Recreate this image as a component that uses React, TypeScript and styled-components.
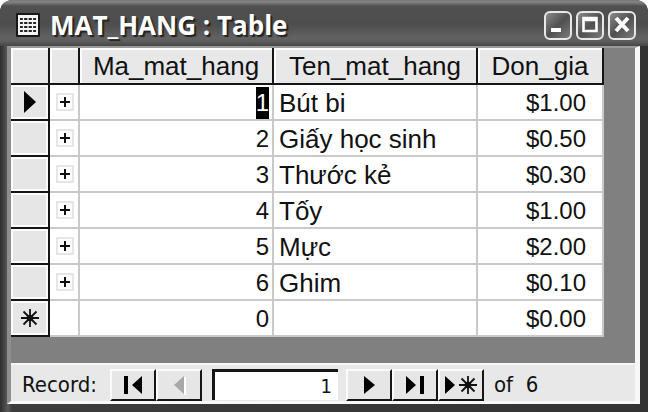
import React from "react";
import styled, { createGlobalStyle } from "styled-components";

const GlobalStyle = createGlobalStyle`
  *, *::before, *::after { box-sizing: border-box; }
  body { margin: 0; background: #fff; }
`;

const Window = styled.main`
  display: flex;
  flex-direction: column;
  min-height: 100vh;
  padding: 0 8px 8px 7px;
  border-radius: 12px 12px 0 0;
  background: linear-gradient(to right, #2e2e2e 0, #444 4px, #5c5c5c 8px, #3c3c3c 12px, #333 100%);
  font-family: "Liberation Sans", Arial, sans-serif;
  color: #111;
`;

const TitleBar = styled.header`
  display: flex;
  align-items: center;
  gap: 10px;
  height: 46px;
  margin: 0 -8px 0 -7px;
  padding: 4px 12px 0 16px;
  border-radius: 12px 12px 0 0;
  background: linear-gradient(#777 0, #858585 2px, #505050 6px, #4d4d4d 24px, #626262 38px, #5e5e5e 41px, #464646 46px);
`;

const Title = styled.h1`
  flex: 1;
  margin: 0;
  font: bold 26px/30px "Open Sans", "Noto Sans", sans-serif;
  color: #fff;
  text-shadow: 2px 2px 1px #222;
  white-space: pre;
`;

const WindowButtons = styled.div`
  display: flex;
  gap: 4px;
`;

const WindowButton = styled.button`
  display: flex;
  align-items: center;
  justify-content: center;
  width: 28px;
  height: 29px;
  padding: 0;
  border: 2px solid #e8e8e8;
  border-radius: 6px;
  background: linear-gradient(135deg, #8a8a8a, #505050 50%, #7a7a7a);
`;

const Client = styled.section`
  display: flex;
  flex: 1;
  flex-direction: column;
  border-style: solid;
  border-width: 2px 5px 3px 4px;
  border-color: #9a9a9a #f8f8f8 #f8f8f8 #8e8e8e;
  background: #e8e8e8;
`;

const Sheet = styled.div`
  flex: 1;
  background: #808080;
`;

const Grid = styled.table`
  width: 593px;
  table-layout: fixed;
  border-collapse: separate;
  border-spacing: 0;
  font-size: 24px;
  line-height: 32px;
`;

const Col = styled.col<{ $w: number }>`
  width: ${(p) => p.$w}px;
`;

const HeadCell = styled.th`
  height: 37px;
  padding: 0;
  border-right: 2px solid #151515;
  border-bottom: 2px solid #151515;
  background: #e8e8e8;
  box-shadow: inset 2px 2px #fcfcfc;
  font-size: 26px;
  font-weight: normal;
  line-height: 34px;
`;

const Selector = styled.th`
  height: 36px;
  padding: 0;
  border-right: 2px solid #151515;
  border-bottom: 2px solid #151515;
  background: #e6e6e6;
  box-shadow: inset 0 0 0 2px #fbfbfb;
  line-height: 0;
`;

const Cell = styled.td<{ $end?: number }>`
  height: 36px;
  padding: 2px ${(p) => p.$end ?? 3}px 0 4px;
  border-right: 2px solid #c9c9c9;
  border-bottom: 2px solid #c9c9c9;
  background: #fff;
  text-align: right;
  white-space: nowrap;
`;

const NameCell = styled(Cell)`
  padding-left: 5px;
  font-size: 26px;
  text-align: left;
`;

const ExpandCell = styled(Cell)`
  padding: 0;
  line-height: 0;
`;

const Expand = styled.button`
  display: flex;
  align-items: center;
  justify-content: center;
  width: 18px;
  height: 18px;
  margin: 0 0 0 6px;
  padding: 0;
  border: 2px solid #e6e6e6;
  background: #fff;
`;

const Selected = styled.span`
  display: inline-block;
  height: 32px;
  vertical-align: top;
  background: #000;
  color: #fff;
`;

const RecordBar = styled.form`
  display: flex;
  align-items: center;
  height: 38px;
  padding: 3px 0 0 11px;
  border-top: 2px solid #f6f6f6;
  font: 22px/28px "DejaVu Sans Condensed", "DejaVu Sans", sans-serif;
`;

const RecordLabel = styled.label`
  width: 88px;
  white-space: nowrap;
`;

const RecordInput = styled.input`
  width: 126px;
  height: 31px;
  margin: 0 8px 0 10px;
  padding: 0 6px 0 4px;
  border: solid #151515;
  border-width: 3px 0 0 3px;
  border-radius: 0;
  background: #fff;
  font: inherit;
  font-size: 20px;
  color: #111;
  text-align: right;
`;

const NavButton = styled.button`
  display: flex;
  align-items: center;
  justify-content: center;
  width: 46px;
  height: 32px;
  padding: 0;
  border: solid;
  border-width: 2px;
  border-color: #fbfbfb #151515 #151515 #fbfbfb;
  background: #e6e6e6;
`;

const Total = styled.span`
  margin-left: 10px;
  white-space: pre;
`;

const TableIcon = () => (
  <svg width="24" height="24" viewBox="0 0 24 24" aria-hidden="true">
    <rect width="24" height="24" rx="1" fill="#181818" />
    <rect x="2" y="2" width="20" height="20" fill="#f4f4f4" />
    <path d="M4 6h16M4 10h16M4 14h16M4 18h16" stroke="#222" strokeWidth="2" />
    <path d="M7.5 4v16M12 4v16M16.5 4v16" stroke="#f4f4f4" strokeWidth="1.3" />
  </svg>
);

const Star = () => (
  <svg width="20" height="20" viewBox="0 0 20 20" aria-hidden="true">
    <path d="M10 1v18M1 10h18M3.5 3.5l13 13M16.5 3.5l-13 13" stroke="#111" strokeWidth="1.8" />
    <circle cx="10" cy="10" r="3.3" fill="#111" />
  </svg>
);

const Current = () => (
  <svg width="12" height="22" viewBox="0 0 12 22" aria-hidden="true">
    <path d="M0 0l12 11L0 22z" fill="#000" />
  </svg>
);

const Plus = () => (
  <svg width="12" height="12" viewBox="0 0 12 12" aria-hidden="true">
    <path d="M6 1v10M1 6h10" stroke="#111" strokeWidth="2" />
  </svg>
);

const navShapes = {
  first: "M1 1h4v18H1zM19 1v18L9 10z",
  previous: "M15 1v18L5 10z",
  next: "M5 1l11 9-11 9z",
  last: "M1 1l10 9-10 9zM15 1h4v18h-4z",
};

const NavIcon = ({ kind, color = "#000" }: { kind: keyof typeof navShapes; color?: string }) => (
  <svg width="20" height="20" viewBox="0 0 20 20" aria-hidden="true">
    {kind === "previous" && <path d="M16 2v18" stroke="#fff" strokeWidth="2" />}
    <path d={navShapes[kind]} fill={color} />
  </svg>
);

const NewIcon = () => (
  <svg width="34" height="20" viewBox="0 0 34 20" aria-hidden="true">
    <path d="M1 1l10 9-10 9z" fill="#000" />
    <path d="M24 1v18M15 10h18M17.5 3.5l13 13M30.5 3.5l-13 13" stroke="#111" strokeWidth="1.8" />
    <circle cx="24" cy="10" r="3.3" fill="#111" />
  </svg>
);

const items = [
  { id: 1, name: "Bút bi", price: "$1.00" },
  { id: 2, name: "Giấy học sinh", price: "$0.50" },
  { id: 3, name: "Thước kẻ", price: "$0.30" },
  { id: 4, name: "Tốy", price: "$1.00" },
  { id: 5, name: "Mực", price: "$2.00" },
  { id: 6, name: "Ghim", price: "$0.10" },
];

export default function App() {
  return (
    <>
      <GlobalStyle />
      <Window>
        <TitleBar>
          <TableIcon />
          <Title>MAT_HANG : Table</Title>
          <WindowButtons>
            <WindowButton aria-label="Minimize">
              <svg width="24" height="24" viewBox="0 0 24 24"><path d="M5 17h10" stroke="#fff" strokeWidth="4" /></svg>
            </WindowButton>
            <WindowButton aria-label="Maximize">
              <svg width="24" height="24" viewBox="0 0 24 24"><path d="M5.5 5h13v13h-13zM5.5 7h13" fill="none" stroke="#fff" strokeWidth="2.6" /></svg>
            </WindowButton>
            <WindowButton aria-label="Close">
              <svg width="24" height="24" viewBox="0 0 24 24"><path d="M6 5l12 13M18 5L6 18" stroke="#fff" strokeWidth="4" /></svg>
            </WindowButton>
          </WindowButtons>
        </TitleBar>
        <Client>
          <Sheet>
            <Grid>
              <colgroup>
                <Col $w={39} />
                <Col $w={30} />
                <Col $w={194} />
                <Col $w={204} />
                <Col $w={126} />
              </colgroup>
              <thead>
                <tr>
                  <HeadCell />
                  <HeadCell />
                  <HeadCell scope="col">Ma_mat_hang</HeadCell>
                  <HeadCell scope="col">Ten_mat_hang</HeadCell>
                  <HeadCell scope="col">Don_gia</HeadCell>
                </tr>
              </thead>
              <tbody>
                {items.map((item, i) => (
                  <tr key={item.id}>
                    <Selector scope="row">{i === 0 && <Current />}</Selector>
                    <ExpandCell>
                      <Expand aria-label={`Expand ${item.name}`}><Plus /></Expand>
                    </ExpandCell>
                    <Cell>{i === 0 ? <Selected>{item.id}</Selected> : item.id}</Cell>
                    <NameCell>{item.name}</NameCell>
                    <Cell $end={16}>{item.price}</Cell>
                  </tr>
                ))}
                <tr>
                  <Selector scope="row"><Star /></Selector>
                  <Cell />
                  <Cell>0</Cell>
                  <NameCell />
                  <Cell $end={16}>$0.00</Cell>
                </tr>
              </tbody>
            </Grid>
          </Sheet>
          <RecordBar onSubmit={(e) => e.preventDefault()}>
            <RecordLabel htmlFor="record">Record:</RecordLabel>
            <NavButton type="button" aria-label="First record"><NavIcon kind="first" /></NavButton>
            <NavButton type="button" aria-label="Previous record" disabled><NavIcon kind="previous" color="#a8a8a8" /></NavButton>
            <RecordInput id="record" defaultValue="1" />
            <NavButton type="button" aria-label="Next record"><NavIcon kind="next" /></NavButton>
            <NavButton type="button" aria-label="Last record"><NavIcon kind="last" /></NavButton>
            <NavButton type="button" aria-label="New record"><NewIcon /></NavButton>
            <Total>of  6</Total>
          </RecordBar>
        </Client>
      </Window>
    </>
  );
}
